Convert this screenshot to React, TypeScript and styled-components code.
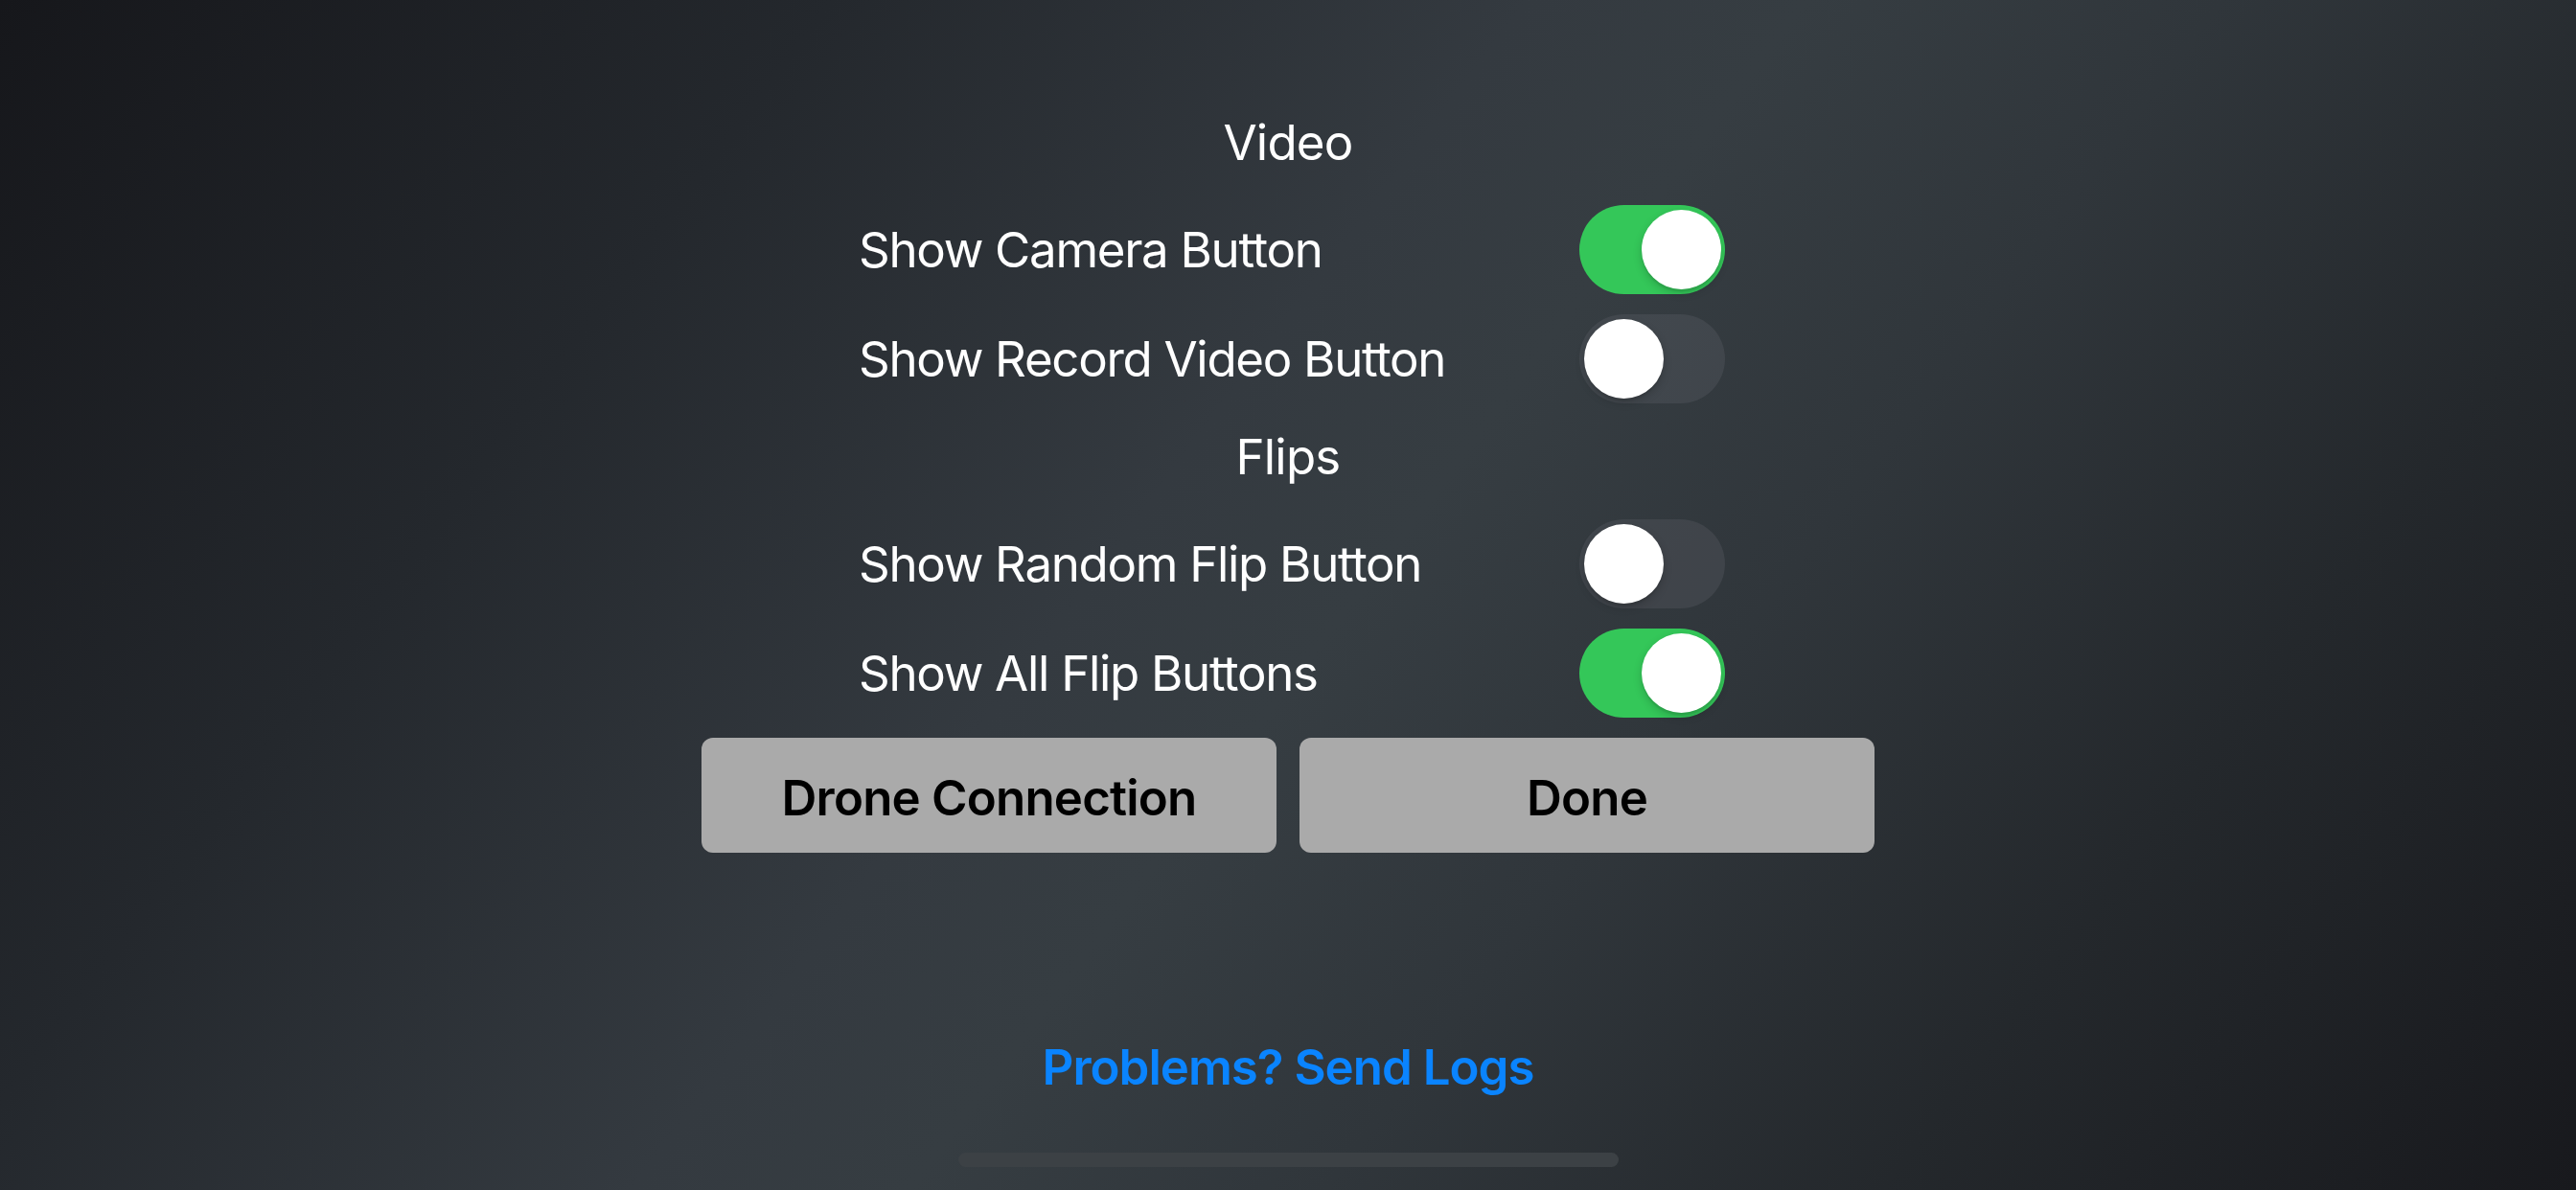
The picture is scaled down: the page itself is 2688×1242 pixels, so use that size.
import React, { useState } from 'react'
import styled, { createGlobalStyle } from 'styled-components'

const GlobalStyle = createGlobalStyle`
    html, body {
        margin: 0;
        padding: 0;
        background: #1c1d21;
    }
    * {
        box-sizing: border-box;
    }
`

const Screen = styled.div`
    width: 2688px;
    height: 1242px;
    overflow: hidden;
    display: flex;
    flex-direction: column;
    align-items: center;
    padding-top: 114px;
    font-family: 'Inter', 'Noto Sans', sans-serif;
    color: #ffffff;
    background: linear-gradient(
        127deg,
        #16171b 0%,
        #24282d 24%,
        #343a40 44%,
        #363d42 52%,
        #30363b 64%,
        #24282c 80%,
        #18191d 100%
    );
`

const Stack = styled.div`
    display: flex;
    flex-direction: column;
    align-items: center;
    gap: 21px;
`

const SectionTitle = styled.div`
    height: 79px;
    line-height: 69px;
    padding-bottom: 10px;
    font-size: 51px;
    font-weight: 400;
    letter-spacing: -0.8px;
    text-align: center;
`

const Row = styled.div`
    width: 912px;
    height: 93px;
    padding-left: 8px;
    display: flex;
    align-items: center;
    justify-content: space-between;
`

const Label = styled.span`
    font-size: 51px;
    font-weight: 400;
    letter-spacing: -1.3px;
`

const Track = styled.button<{ $on: boolean }>`
    position: relative;
    width: 152px;
    height: 93px;
    border: none;
    padding: 0;
    border-radius: 47px;
    cursor: pointer;
    background: ${p => (p.$on ? '#34c759' : 'rgba(120, 120, 128, 0.2)')};
    transition: background 0.2s;
`

const Knob = styled.span<{ $on: boolean }>`
    position: absolute;
    top: 5px;
    left: ${p => (p.$on ? '65px' : '5px')};
    width: 83px;
    height: 83px;
    border-radius: 50%;
    background: #ffffff;
    box-shadow: 0 4px 10px rgba(0, 0, 0, 0.18), 0 3px 1px rgba(0, 0, 0, 0.06);
    transition: left 0.2s;
`

const ButtonRow = styled.div`
    display: flex;
    gap: 24px;
`

const ActionButton = styled.button`
    width: 600px;
    height: 120px;
    padding: 4px 0 0;
    border: none;
    border-radius: 12px;
    background: #aaaaaa;
    color: #000000;
    font-family: 'Inter', 'Noto Sans', sans-serif;
    font-size: 51px;
    font-weight: 600;
    letter-spacing: -0.8px;
    cursor: pointer;
`

const LogsLink = styled.a`
    margin-top: 193px;
    height: 62px;
    line-height: 62px;
    font-size: 51px;
    font-weight: 600;
    letter-spacing: -1px;
    color: #0a84ff;
    text-decoration: none;
    cursor: pointer;
`

const HomeIndicator = styled.div`
    margin-top: auto;
    margin-bottom: 24px;
    width: 689px;
    height: 15px;
    border-radius: 8px;
    background: #3c4145;
`

const Toggle: React.FC<{ initial: boolean }> = ({ initial }) => {
    const [on, setOn] = useState(initial)
    return (
        <Track $on={on} onClick={() => setOn(!on)}>
            <Knob $on={on} />
        </Track>
    )
}

const sections = [
    {
        title: 'Video',
        rows: [
            { label: 'Show Camera Button', on: true },
            { label: 'Show Record Video Button', on: false }
        ]
    },
    {
        title: 'Flips',
        rows: [
            { label: 'Show Random Flip Button', on: false },
            { label: 'Show All Flip Buttons', on: true }
        ]
    }
]

export default function App() {
    return (
        <>
            <GlobalStyle />
            <Screen>
                <Stack>
                    {sections.map(section => (
                        <React.Fragment key={section.title}>
                            <SectionTitle>{section.title}</SectionTitle>
                            {section.rows.map(row => (
                                <Row key={row.label}>
                                    <Label>{row.label}</Label>
                                    <Toggle initial={row.on} />
                                </Row>
                            ))}
                        </React.Fragment>
                    ))}
                    <ButtonRow>
                        <ActionButton>Drone Connection</ActionButton>
                        <ActionButton>Done</ActionButton>
                    </ButtonRow>
                </Stack>
                <LogsLink>Problems? Send Logs</LogsLink>
                <HomeIndicator />
            </Screen>
        </>
    )
}
